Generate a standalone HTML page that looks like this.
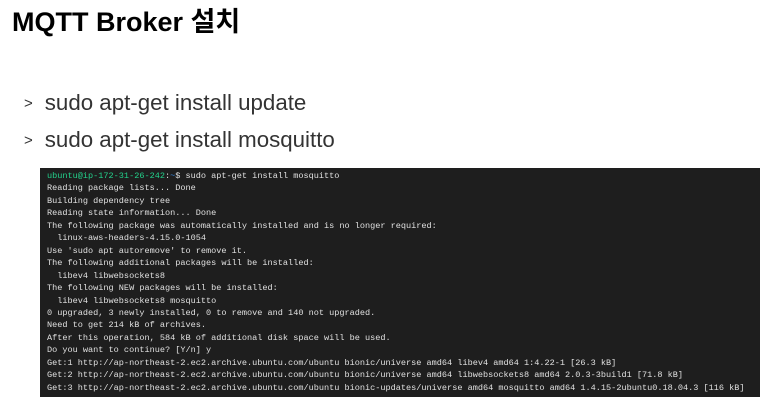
<!DOCTYPE html>
<html><head><meta charset="utf-8"><style>
body{margin:0;width:773px;height:417px;background:#fff;position:relative;overflow:hidden;font-family:"Liberation Sans","Noto Sans CJK KR",sans-serif}
h1{position:absolute;left:12px;top:5px;margin:0;font-size:27px;font-weight:bold;color:#000;line-height:34px}
.b{position:absolute;left:24px;font-size:22.3px;color:#333;line-height:26px;white-space:nowrap}
.b span{font-size:15px;margin-right:12px;vertical-align:2px}
.t{position:absolute;left:40px;top:168px;width:720px;height:229px;background:#1e1e1e;color:#e0e0e0;font-family:"Liberation Mono",monospace;font-size:8.55px;line-height:12.45px;padding:2px 0 0 7px;box-sizing:border-box;white-space:pre;overflow:hidden}
.g{color:#23d18b}.bl{color:#3b8eea}
</style></head><body>
<h1>MQTT Broker 설치</h1>
<div class="b" style="top:90px"><span>&gt;</span>sudo apt-get install update</div>
<div class="b" style="top:127px"><span>&gt;</span>sudo apt-get install mosquitto</div>
<div class="t"><span class="g">ubuntu@ip-172-31-26-242</span>:<span class="bl">~</span>$ sudo apt-get install mosquitto
Reading package lists... Done
Building dependency tree
Reading state information... Done
The following package was automatically installed and is no longer required:
  linux-aws-headers-4.15.0-1054
Use 'sudo apt autoremove' to remove it.
The following additional packages will be installed:
  libev4 libwebsockets8
The following NEW packages will be installed:
  libev4 libwebsockets8 mosquitto
0 upgraded, 3 newly installed, 0 to remove and 140 not upgraded.
Need to get 214 kB of archives.
After this operation, 584 kB of additional disk space will be used.
Do you want to continue? [Y/n] y
Get:1 http://ap-northeast-2.ec2.archive.ubuntu.com/ubuntu bionic/universe amd64 libev4 amd64 1:4.22-1 [26.3 kB]
Get:2 http://ap-northeast-2.ec2.archive.ubuntu.com/ubuntu bionic/universe amd64 libwebsockets8 amd64 2.0.3-3build1 [71.8 kB]
Get:3 http://ap-northeast-2.ec2.archive.ubuntu.com/ubuntu bionic-updates/universe amd64 mosquitto amd64 1.4.15-2ubuntu0.18.04.3 [116 kB]</div>
</body></html>
